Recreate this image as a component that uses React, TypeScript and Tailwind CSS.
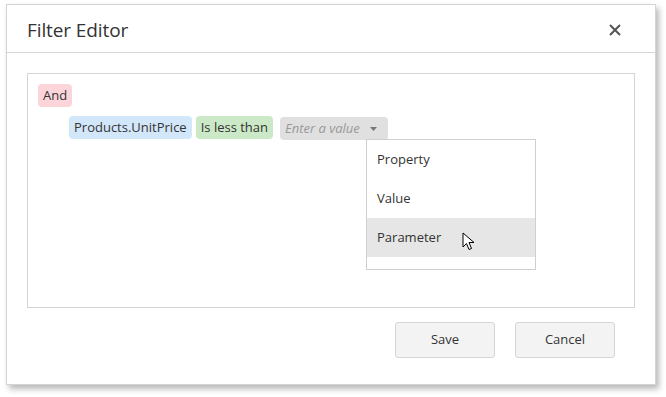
import React from 'react';

const font = { fontFamily: '"Open Sans", "Noto Sans", sans-serif' };

const Chip: React.FC<{ className: string; children: React.ReactNode }> = ({ className, children }) => (
    <span className={`inline-flex items-center h-[23px] px-[5px] rounded-[4px] text-[13px] text-[#333] leading-none ${className}`}>
        {children}
    </span>
);

const App: React.FC = () => {
    return (
        <div className="w-[666px] h-[397px] bg-white overflow-hidden" style={font}>
            <div className="ml-[6px] mt-[4px] w-[650px] h-[381px] bg-white border border-[#d4d4d4] shadow-[3px_4px_6px_rgba(0,0,0,0.28)] flex flex-col">
                {/* Header */}
                <div className="h-[48px] shrink-0 border-b border-[#d6d6d6] flex items-center justify-between pl-[20px] pr-[34px] pt-[3px]">
                    <h2 className="text-[19px] text-[#333] font-normal tracking-[-0.1px]">Filter Editor</h2>
                    <svg width="12" height="12" viewBox="0 0 12 12">
                        <path d="M1 1 L11 11 M11 1 L1 11" stroke="#555" strokeWidth="2" />
                    </svg>
                </div>

                {/* Body */}
                <div className="flex-1 flex flex-col px-[20px] pt-[20px]">
                    <div className="h-[235px] border border-[#d4d4d4] pt-[10px] pl-[10px] flex flex-col items-start">
                        <Chip className="bg-[#fcd5db]">And</Chip>
                        <div className="flex items-center gap-[4px] mt-[8px] ml-[31px]">
                            <Chip className="bg-[#d3e7fb]">Products.UnitPrice</Chip>
                            <Chip className="bg-[#cbe9c6]">Is less than</Chip>
                            <div className="relative ml-[3px]">
                                <span className="inline-flex items-center h-[23px] pl-[5px] pr-[11px] rounded-[4px] bg-[#e0e0e0] text-[13px] italic text-[#999] leading-none">
                                    Enter a value
                                    <svg width="7" height="4" viewBox="0 0 7 4" className="ml-[10px]">
                                        <path d="M0 0 L7 0 L3.5 4 Z" fill="#777" />
                                    </svg>
                                </span>
                                <div className="absolute left-[86px] top-[24px] w-[170px] h-[131px] bg-white border border-[#cfcfcf] flex flex-col text-[13px] text-[#333]">
                                    <div className="h-[39px] flex items-center pl-[10px]">Property</div>
                                    <div className="h-[39px] flex items-center pl-[10px]">Value</div>
                                    <div className="h-[39px] flex items-center pl-[10px] bg-[#e6e6e6] relative">
                                        Parameter
                                        <svg width="13" height="20" viewBox="0 0 13 20" className="absolute left-[95px] top-[14px]">
                                            <path d="M1 1 L1 15 L4.5 11.5 L7 17.5 L9.5 16.5 L7 10.5 L12 10.5 Z" fill="#fff" stroke="#000" strokeWidth="1" strokeLinejoin="round" />
                                        </svg>
                                    </div>
                                </div>
                            </div>
                        </div>
                    </div>

                    {/* Footer */}
                    <div className="flex justify-end gap-[20px] mt-[14px] pr-[20px]">
                        <button className="w-[100px] h-[36px] bg-[#f3f3f3] border border-[#d6d6d6] rounded-[3px] text-[13px] text-[#333]">Save</button>
                        <button className="w-[100px] h-[36px] bg-[#f3f3f3] border border-[#d6d6d6] rounded-[3px] text-[13px] text-[#333]">Cancel</button>
                    </div>
                </div>
            </div>
        </div>
    );
};

export default App;
